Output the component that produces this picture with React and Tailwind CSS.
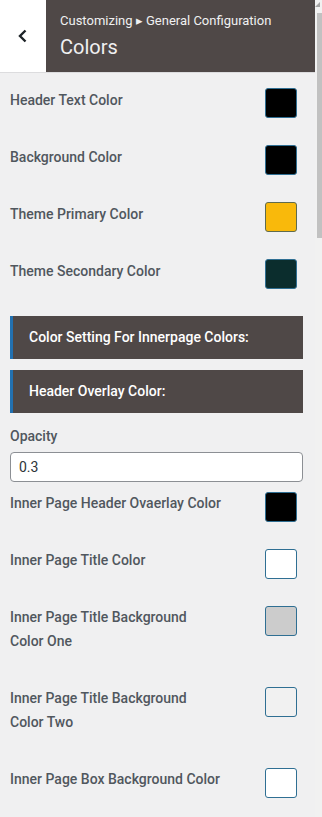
import React from 'react';

const rows1 = [
  { label: 'Header Text Color', color: '#000000' },
  { label: 'Background Color', color: '#000000' },
  { label: 'Theme Primary Color', color: '#f9b90b', border: '#5f6b4e' },
  { label: 'Theme Secondary Color', color: '#0b2d2d' },
];

const rows2 = [
  { label: ['Inner Page Header Ovaerlay Color'], color: '#000000' },
  { label: ['Inner Page Title Color'], color: '#ffffff' },
  { label: ['Inner Page Title Background', 'Color One'], color: '#cccccc' },
  { label: ['Inner Page Title Background', 'Color Two'], color: '#f1f1f1' },
  { label: ['Inner Page Box Background Color'], color: '#ffffff' },
];

const Swatch = ({ color, border }) => (
  <div
    className="w-[32px] h-[30px] rounded-[3px] border shrink-0"
    style={{ backgroundColor: color, borderColor: border || '#2f6f93' }}
  />
);

const SectionTitle = ({ children }) => (
  <div className="h-[43px] bg-[#4f4847] border-l-[3px] border-[#2271b1] flex items-center pl-[16px] text-white text-[14px] font-medium">
    {children}
  </div>
);

const App = () => {
  return (
    <div className="flex h-[817px] w-[322px] overflow-hidden bg-[#f0f0f1] text-[#50575e]" style={{ fontFamily: 'Roboto, "Liberation Sans", sans-serif' }}>
      <div className="flex-1 flex flex-col">
        {/* HEADER */}
        <header className="h-[73px] flex border-b border-[#dcdcde] shrink-0">
          <button className="w-[46px] bg-white flex items-center justify-center">
            <svg width="12" height="14" viewBox="0 0 12 14" fill="none">
              <path d="M8.5 1.5 L3 7 L8.5 12.5" stroke="#1d2327" strokeWidth="2.4" />
            </svg>
          </button>
          <div className="flex-1 bg-[#4f4847] pl-[14px] pt-[12px] text-[#f0f0f1]">
            <div className="text-[13px] leading-[17px]">Customizing ▸ General Configuration</div>
            <div className="text-[20px] leading-[26px] mt-[5px]">Colors</div>
          </div>
        </header>

        {/* CONTENT */}
        <main className="pl-[10px] pr-[12px] pt-[15px]">
          {rows1.map((r) => (
            <div key={r.label} className="h-[57px] flex justify-between items-start pr-[6px]">
              <span className="text-[14px] font-medium leading-[24px]">{r.label}</span>
              <Swatch color={r.color} border={r.border} />
            </div>
          ))}

          <div className="flex flex-col gap-[11px]">
            <SectionTitle>Color Setting For Innerpage Colors:</SectionTitle>
            <SectionTitle>Header Overlay Color:</SectionTitle>
          </div>

          <div className="mt-[11px] text-[14px] font-medium leading-[24px]">Opacity</div>
          <input
            readOnly
            value="0.3"
            className="mt-[4px] w-full h-[30px] bg-white border border-[#8c8f94] rounded-[4px] px-[8px] text-[14px] text-[#2c3338] outline-none"
          />

          <div className="mt-[9px]">
            {rows2.map((r) => (
              <div
                key={r.label.join(' ')}
                className={`${r.label.length > 1 ? 'h-[81px]' : 'h-[57px]'} flex justify-between items-start pr-[6px]`}
              >
                <span className="text-[14px] font-medium leading-[24px]">
                  {r.label.map((l, i) => (
                    <span key={i} className="block">{l}</span>
                  ))}
                </span>
                <div className="mt-[1px]">
                  <Swatch color={r.color} />
                </div>
              </div>
            ))}
          </div>
        </main>
      </div>

      {/* SCROLLBAR */}
      <div className="w-[7px] bg-[#f1f1f1] flex flex-col items-end shrink-0">
        <svg width="6" height="6" viewBox="0 0 6 6" className="mt-[2px] mr-[1px]">
          <path d="M0 5 L5 0 L5 5 Z" fill="#a3a3a3" />
        </svg>
        <div className="mt-[5px] w-[5px] h-[225px] bg-[#c1c1c1]" />
      </div>
    </div>
  );
};

export default App;
